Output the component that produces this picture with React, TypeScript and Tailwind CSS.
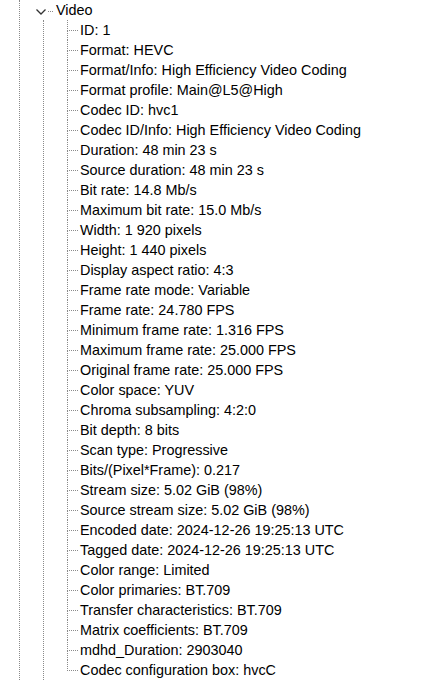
const items = [
  'ID: 1',
  'Format: HEVC',
  'Format/Info: High Efficiency Video Coding',
  'Format profile: Main@L5@High',
  'Codec ID: hvc1',
  'Codec ID/Info: High Efficiency Video Coding',
  'Duration: 48 min 23 s',
  'Source duration: 48 min 23 s',
  'Bit rate: 14.8 Mb/s',
  'Maximum bit rate: 15.0 Mb/s',
  'Width: 1 920 pixels',
  'Height: 1 440 pixels',
  'Display aspect ratio: 4:3',
  'Frame rate mode: Variable',
  'Frame rate: 24.780 FPS',
  'Minimum frame rate: 1.316 FPS',
  'Maximum frame rate: 25.000 FPS',
  'Original frame rate: 25.000 FPS',
  'Color space: YUV',
  'Chroma subsampling: 4:2:0',
  'Bit depth: 8 bits',
  'Scan type: Progressive',
  'Bits/(Pixel*Frame): 0.217',
  'Stream size: 5.02 GiB (98%)',
  'Source stream size: 5.02 GiB (98%)',
  'Encoded date: 2024-12-26 19:25:13 UTC',
  'Tagged date: 2024-12-26 19:25:13 UTC',
  'Color range: Limited',
  'Color primaries: BT.709',
  'Transfer characteristics: BT.709',
  'Matrix coefficients: BT.709',
  'mdhd_Duration: 2903040',
  'Codec configuration box: hvcC',
];

function Leaf({ text, last }: { text: string; last: boolean }) {
  return (
    <div className="flex h-5">
      <div className="flex w-[11px] shrink-0 flex-col">
        <div className="h-[11px] border-b border-l border-dotted border-[#8a8a8a]" />
        {!last && <div className="flex-1 border-l border-dotted border-[#8a8a8a]" />}
      </div>
      <span className="ml-[2px] whitespace-nowrap leading-5">{text}</span>
    </div>
  );
}

export default function App() {
  return (
    <div className="flex h-[680px] w-[439px] overflow-hidden bg-white font-['Liberation_Sans',Arial,sans-serif] text-[14.4px] text-black">
      <div className="ml-[19px] flex-1 border-l border-dotted border-[#8a8a8a]">
        <div className="flex h-5">
          <svg className="ml-[16px] mt-[9px] shrink-0" width="10" height="6" viewBox="0 0 10 6">
            <polyline points="0.5,0.5 5,5 9.5,0.5" fill="none" stroke="#333333" strokeWidth="1.3" />
          </svg>
          <div className="ml-[2px] mt-[11px] h-0 w-[5px] border-t border-dotted border-[#8a8a8a]" />
          <span className="ml-[3px] whitespace-nowrap leading-5">Video</span>
        </div>
        <div className="ml-[23px] border-l border-dotted border-[#8a8a8a]">
          <div className="ml-[23px]">
            {items.map((t, i) => (
              <Leaf key={t} text={t} last={i === items.length - 1} />
            ))}
          </div>
        </div>
      </div>
    </div>
  );
}
